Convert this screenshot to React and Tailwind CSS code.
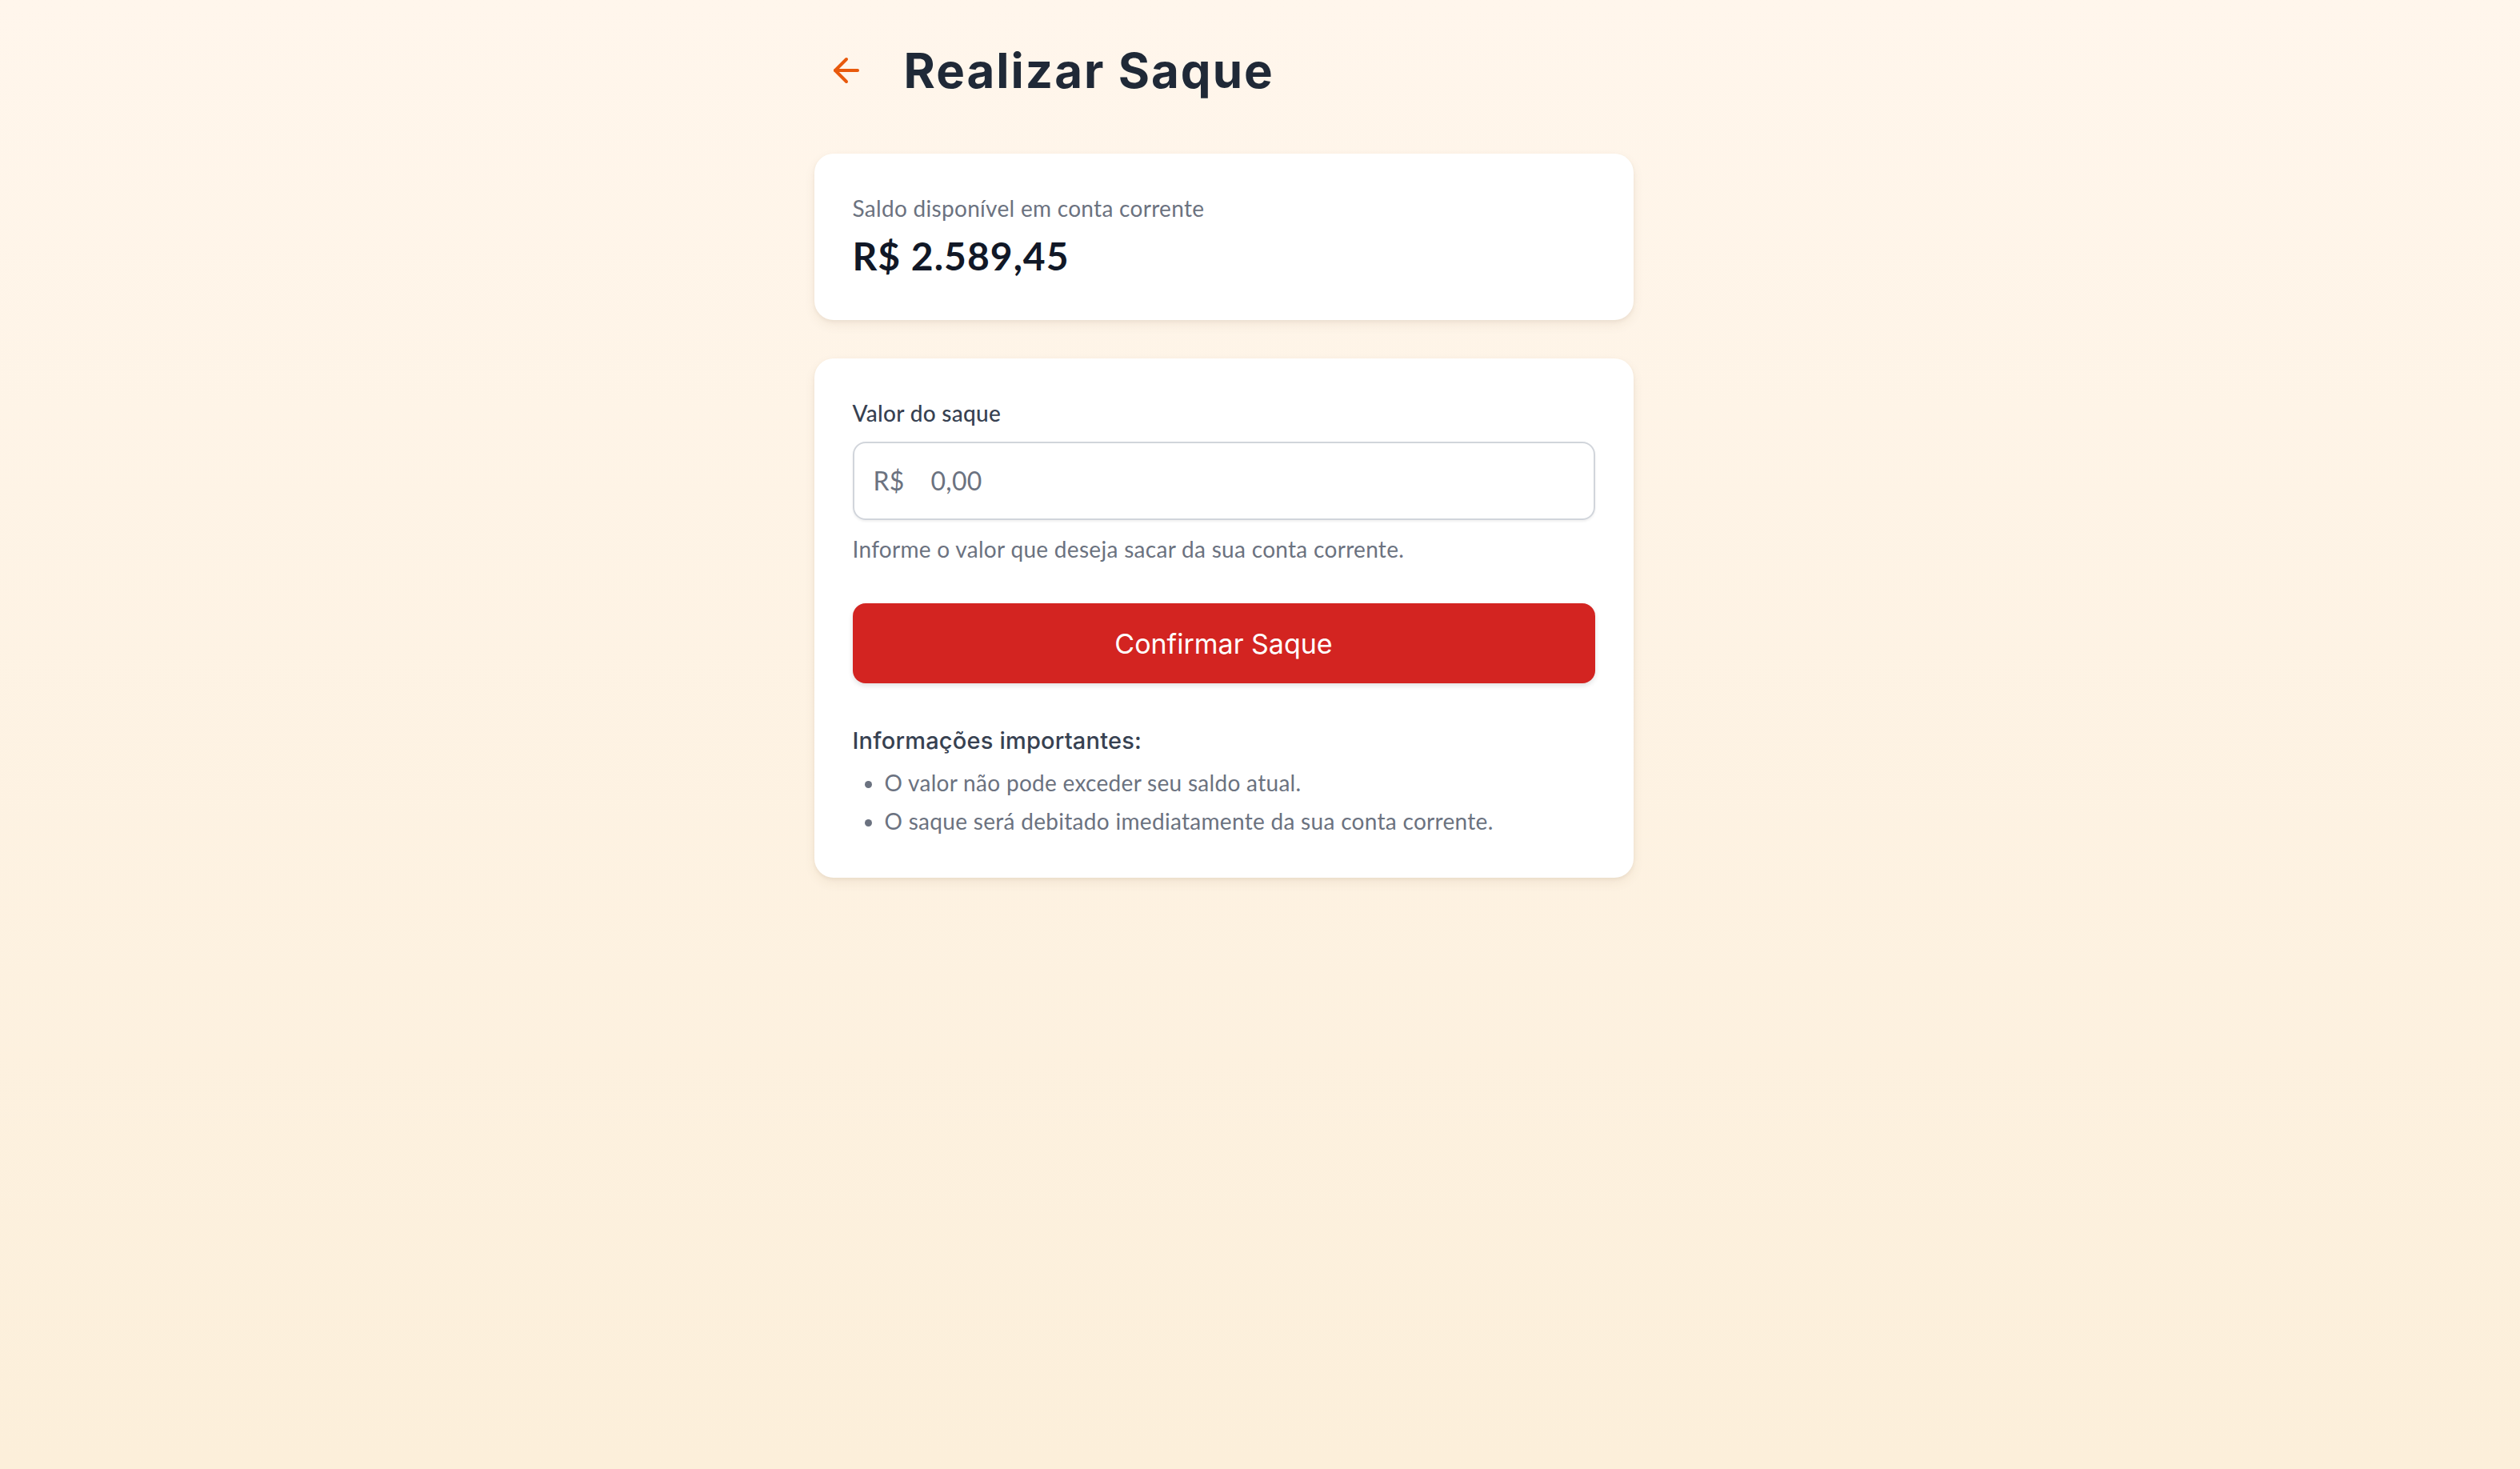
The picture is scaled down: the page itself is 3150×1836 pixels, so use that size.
import { ArrowLeft } from "lucide-react";

export default function App() {
  return (
    <div className="min-h-screen w-full bg-linear-to-b from-[#fff6ec] to-[#fcefda] font-['Lato','Noto_Sans',sans-serif] tracking-[0.3px]">
      <div className="pr-[91px] pt-12 pb-12">
        <div className="mx-auto w-[1024px]">
          <header className="flex items-center gap-8 mb-16">
            <button className="p-4 rounded-full text-[#e8590c]">
              <ArrowLeft size={48} strokeWidth={2} />
            </button>
            <h1 className="font-['Inter',sans-serif] font-bold text-[60px] leading-[72px] text-[#1f2937] tracking-[2px]">
              Realizar Saque
            </h1>
          </header>

          <div className="flex flex-col gap-12">
            <section className="bg-white rounded-[24px] p-12 shadow-[0_2px_4px_rgba(120,90,50,0.08),0_6px_14px_rgba(120,90,50,0.08)]">
              <p className="text-[28px] leading-[40px] text-[#6b7280]">Saldo disponível em conta corrente</p>
              <p className="mt-2 text-[48px] leading-[64px] font-bold text-[#111827] tracking-[1px]">R$ 2.589,45</p>
            </section>

            <section className="bg-white rounded-[24px] px-12 pt-12 pb-[51px] shadow-[0_2px_4px_rgba(120,90,50,0.08),0_6px_14px_rgba(120,90,50,0.08)]">
              <label className="block text-[28px] leading-[40px] font-medium text-[#374151] mb-4">Valor do saque</label>
              <div className="flex items-center h-[98px] border-2 border-[#d1d5db] rounded-2xl pl-6 shadow-[0_2px_3px_rgba(0,0,0,0.06)]">
                <span className="w-[72px] text-[32px] text-[#6b7280]">R$</span>
                <input
                  className="flex-1 bg-transparent outline-none text-[32px] text-[#111827] placeholder:text-[#6b7280]"
                  placeholder="0,00"
                />
              </div>
              <p className="mt-4 text-[28px] leading-[40px] text-[#6b7280]">Informe o valor que deseja sacar da sua conta corrente.</p>

              <button className="mt-12 w-full h-[100px] rounded-2xl bg-[#d32421] text-white font-['Inter',sans-serif] font-normal text-[34px] tracking-[0px] shadow-[0_3px_6px_rgba(0,0,0,0.12)]">
                Confirmar Saque
              </button>

              <div className="mt-[52px]">
                <h3 className="font-['Inter',sans-serif] font-medium text-[29px] leading-[40px] text-[#374151] tracking-[0.2px] mb-3">Informações importantes:</h3>
                <ul className="list-disc pl-10 flex flex-col gap-2 text-[28px] leading-[40px] text-[#6b7280]">
                  <li>O valor não pode exceder seu saldo atual.</li>
                  <li>O saque será debitado imediatamente da sua conta corrente.</li>
                </ul>
              </div>
            </section>
          </div>
        </div>
      </div>
    </div>
  );
}
